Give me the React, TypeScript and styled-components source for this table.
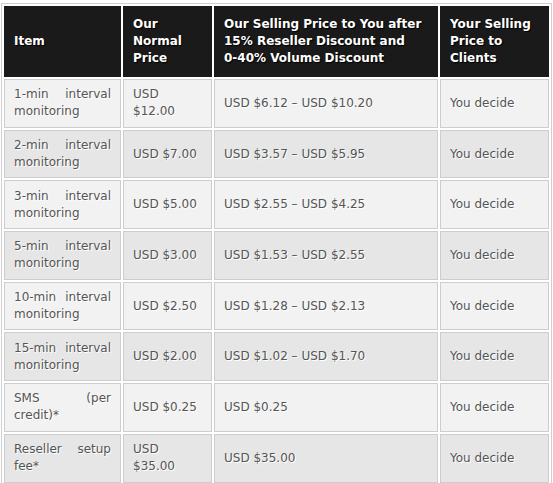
import styled, { createGlobalStyle } from 'styled-components';

interface InRow {
    item: string;
    normal: string;
    reseller: string;
    client: string;
}

const rows: InRow[] = [
    { item: '1-min interval monitoring', normal: 'USD $12.00', reseller: 'USD $6.12 – USD $10.20', client: 'You decide' },
    { item: '2-min interval monitoring', normal: 'USD $7.00', reseller: 'USD $3.57 – USD $5.95', client: 'You decide' },
    { item: '3-min interval monitoring', normal: 'USD $5.00', reseller: 'USD $2.55 – USD $4.25', client: 'You decide' },
    { item: '5-min interval monitoring', normal: 'USD $3.00', reseller: 'USD $1.53 – USD $2.55', client: 'You decide' },
    { item: '10-min interval monitoring', normal: 'USD $2.50', reseller: 'USD $1.28 – USD $2.13', client: 'You decide' },
    { item: '15-min interval monitoring', normal: 'USD $2.00', reseller: 'USD $1.02 – USD $1.70', client: 'You decide' },
    { item: 'SMS (per credit)*', normal: 'USD $0.25', reseller: 'USD $0.25', client: 'You decide' },
    { item: 'Reseller setup fee*', normal: 'USD $35.00', reseller: 'USD $35.00', client: 'You decide' },
];

const GlobalStyle = createGlobalStyle`
    body {
        margin: 0;
        background: #fff;
        font-family: "DejaVu Sans", Verdana, sans-serif;
    }
`;

const App = () => {
    return (
        <Page>
            <GlobalStyle />
            <Heading>Pricing</Heading>
            <PriceTable>
                <colgroup>
                    <col style={{ width: 117 }} />
                    <col style={{ width: 89 }} />
                    <col style={{ width: 224 }} />
                    <col style={{ width: 109 }} />
                </colgroup>
                <thead>
                    <tr>
                        <HeadCell>Item</HeadCell>
                        <HeadCell>Our Normal Price</HeadCell>
                        <HeadCell>
                            Our Selling Price to You after 15% Reseller Discount and <NoWrap>0-40%</NoWrap> Volume Discount
                        </HeadCell>
                        <HeadCell>Your Selling Price to Clients</HeadCell>
                    </tr>
                </thead>
                <tbody>
                    {rows.map((row, i) => (
                        <Row key={row.item} $alt={i % 2 === 1}>
                            <Cell $justify>{row.item}</Cell>
                            <Cell>{row.normal}</Cell>
                            <Cell>{row.reseller}</Cell>
                            <Cell>{row.client}</Cell>
                        </Row>
                    ))}
                </tbody>
            </PriceTable>
        </Page>
    );
};

export default App;

const Page = styled.div`
    padding-left: 1px;
    overflow: hidden;
`;

const Heading = styled.h2`
    margin: -16px 0 0 0;
    height: 18px;
    line-height: 16px;
    font-size: 13px;
    font-weight: bold;
    color: #333;
`;

const PriceTable = styled.table`
    margin-top: 1px;
    width: 551px;
    table-layout: fixed;
    border-collapse: separate;
    border-spacing: 2px;
    border: 1px solid #cfcfcf;
    background: #fff;
    font-size: 12px;
    line-height: 17px;
`;

const NoWrap = styled.span`
    white-space: nowrap;
`;

const HeadCell = styled.th`
    height: 71px;
    box-sizing: border-box;
    padding: 0 9px;
    background: #1a1a1a;
    border: 1px solid #1a1a1a;
    color: #fff;
    font-weight: bold;
    text-align: left;
    vertical-align: middle;
    text-shadow: 1px 1px 1px #000;
`;

const Row = styled.tr<{ $alt: boolean }>`
    td {
        background: ${(p) => (p.$alt ? '#e6e6e6' : '#f2f2f2')};
    }
`;

const Cell = styled.td<{ $justify?: boolean }>`
    height: 48.7px;
    box-sizing: border-box;
    padding: 0 9px;
    border: 1px solid #cdcdcd;
    color: #555;
    text-align: ${(p) => (p.$justify ? 'justify' : 'left')};
    vertical-align: middle;
    text-shadow: 1px 1px 0 #fff;
`;
